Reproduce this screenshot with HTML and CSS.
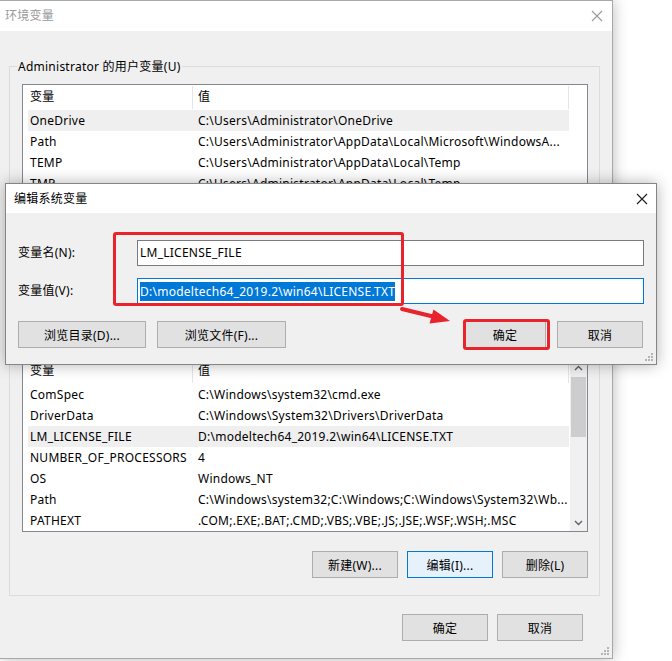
FILE: index.html
```html
<!DOCTYPE html>
<html lang="zh-CN">
<head>
<meta charset="utf-8">
<title>环境变量</title>
<link rel="stylesheet" href="styles.css">
</head>
<body>
<div class="desk">
  <div class="win main">
    <div class="titlebar">
      <span class="ttl inactive">环境变量</span>
      <svg class="close" width="12" height="12" viewBox="0 0 12 12"><path d="M1 1L11 11M11 1L1 11" stroke="#9a9a9a" stroke-width="1.1" fill="none"/></svg>
    </div>
    <div class="wbody">
      <div class="group g1">
        <span class="legend">Administrator 的用户变量(U)</span>
        <div class="list l1">
          <div class="tbl">
            <div class="hd c1">变量</div><div class="hd c2">值</div>
            <div class="c1 sel">OneDrive</div><div class="c2 sel">C:\Users\Administrator\OneDrive</div>
            <div class="c1">Path</div><div class="c2">C:\Users\Administrator\AppData\Local\Microsoft\WindowsA...</div>
            <div class="c1">TEMP</div><div class="c2">C:\Users\Administrator\AppData\Local\Temp</div>
            <div class="c1">TMP</div><div class="c2">C:\Users\Administrator\AppData\Local\Temp</div>
          </div>
          <div class="sbar blank"></div>
        </div>
        <div class="btnrow">
          <button class="btn">新建(N)...</button>
          <button class="btn">编辑(E)...</button>
          <button class="btn">删除(D)</button>
        </div>
      </div>
      <div class="group g2">
        <span class="legend">系统变量(S)</span>
        <div class="list l2">
          <div class="tbl">
            <div class="hd c1">变量</div><div class="hd c2">值</div>
            <div class="c1">ComSpec</div><div class="c2">C:\Windows\system32\cmd.exe</div>
            <div class="c1">DriverData</div><div class="c2">C:\Windows\System32\Drivers\DriverData</div>
            <div class="c1 sel">LM_LICENSE_FILE</div><div class="c2 sel">D:\modeltech64_2019.2\win64\LICENSE.TXT</div>
            <div class="c1">NUMBER_OF_PROCESSORS</div><div class="c2">4</div>
            <div class="c1">OS</div><div class="c2">Windows_NT</div>
            <div class="c1">Path</div><div class="c2">C:\Windows\system32;C:\Windows;C:\Windows\System32\Wb...</div>
            <div class="c1">PATHEXT</div><div class="c2">.COM;.EXE;.BAT;.CMD;.VBS;.VBE;.JS;.JSE;.WSF;.WSH;.MSC</div>
          </div>
          <div class="sbar">
            <div class="sarrow"><svg width="9" height="6" viewBox="0 0 9 6"><path d="M1 5L4.5 1.5L8 5" stroke="#606060" stroke-width="1.4" fill="none"/></svg></div>
            <div class="thumb"></div>
            <div class="strack"></div>
            <div class="sarrow"><svg width="9" height="6" viewBox="0 0 9 6"><path d="M1 1L4.5 4.5L8 1" stroke="#606060" stroke-width="1.4" fill="none"/></svg></div>
          </div>
        </div>
        <div class="btnrow">
          <button class="btn">新建(W)...</button>
          <button class="btn focus">编辑(I)...</button>
          <button class="btn">删除(L)</button>
        </div>
      </div>
      <div class="btnrow foot">
        <button class="btn">确定</button>
        <button class="btn">取消</button>
      </div>
    </div>
    <svg class="grip" width="8" height="8" viewBox="0 0 8 8"><g fill="#b4b4b4"><rect x="6" y="0" width="2" height="2"/><rect x="3" y="3" width="2" height="2"/><rect x="6" y="3" width="2" height="2"/><rect x="0" y="6" width="2" height="2"/><rect x="3" y="6" width="2" height="2"/><rect x="6" y="6" width="2" height="2"/></g></svg>
  </div>

  <div class="win dlg">
    <div class="titlebar dtitle">
      <span class="ttl">编辑系统变量</span>
      <svg class="close" width="12" height="12" viewBox="0 0 12 12"><path d="M1 1L11 11M11 1L1 11" stroke="#1a1a1a" stroke-width="1.1" fill="none"/></svg>
    </div>
    <div class="dbody">
      <div class="form">
        <label class="lbl">变量名(N):</label>
        <div class="input">LM_LICENSE_FILE</div>
        <label class="lbl">变量值(V):</label>
        <div class="input active"><span class="selection">D:\modeltech64_2019.2\win64\LICENSE.TXT</span></div>
      </div>
      <div class="dbtns">
        <button class="btn browse1">浏览目录(D)...</button>
        <button class="btn browse2">浏览文件(F)...</button>
        <div class="spacer"></div>
        <button class="btn ok">确定</button>
        <button class="btn cancel">取消</button>
      </div>
    </div>
    <svg class="grip" width="8" height="8" viewBox="0 0 8 8"><g fill="#b4b4b4"><rect x="6" y="0" width="2" height="2"/><rect x="3" y="3" width="2" height="2"/><rect x="6" y="3" width="2" height="2"/><rect x="0" y="6" width="2" height="2"/><rect x="3" y="6" width="2" height="2"/><rect x="6" y="6" width="2" height="2"/></g></svg>
  </div>

  <div class="mark m1"></div>
  <div class="mark m2"></div>
  <svg class="arrow" width="672" height="661" viewBox="0 0 672 661">
    <line x1="402" y1="309" x2="433" y2="316.5" stroke="#e8232b" stroke-width="4" stroke-linecap="round"/>
    <polygon points="450,321 433.5,309.5 429.5,323.5" fill="#e8232b"/>
  </svg>
</div>
</body>
</html>
```

FILE: styles.css
```css
* { box-sizing: border-box; }
html, body { margin: 0; padding: 0; background: #ffffff; }
body {
  font-family: "Noto Sans", "Noto Sans CJK SC", sans-serif;
  font-size: 12px;
  letter-spacing: 0.25px;
  color: #000;
}
.desk { position: relative; width: 672px; height: 661px; overflow: hidden; }

.win { position: absolute; background: #f0f0f0; }
.main {
  left: 0; top: 0; width: 613px; height: 659px;
  border-top: 1px solid #a8a8a8;
  border-right: 1px solid #a8a8a8;
  border-bottom: 1px solid #a8a8a8;
  box-shadow: 0 0 14px rgba(0,0,0,0.28);
}
.titlebar {
  height: 30px; background: #fff;
  display: flex; align-items: center; justify-content: space-between;
  padding: 0 8px 0 5px;
}
.ttl { font-size: 12px; line-height: 16px; }
.ttl.inactive { color: #9a9a9a; }
.close { display: block; }
.main .titlebar .close { margin-right: 1px; }

.wbody { padding: 35px 12px 0 9px; }
.group {
  border: 1px solid #dcdcdc;
  padding: 0 11px 17px 12px;
}
.g2 { margin-top: 11px; }
.legend {
  display: block; width: max-content;
  margin: -9px 0 0 -5px; padding: 0 1px;
  line-height: 17px; background: #f0f0f0;
}
.list {
  margin-top: 9px;
  border: 1px solid #828790;
  background: #fff;
  display: flex;
  overflow: hidden;
}
.l1 { height: 182px; }
.l2 { height: 174px; }
.tbl {
  flex: 1;
  display: grid;
  grid-template-columns: 164px 377px;
  grid-auto-rows: 21px;
  grid-template-rows: 25px;
  margin-left: 5px;
  align-content: start;
}
.tbl > div {
  white-space: nowrap; overflow: hidden;
  line-height: 21px;
}
.c1 { padding-left: 2px; }
.c2 { padding-left: 6px; }
.hd.c2 { border-left: 1px solid #e5e5e5; border-right: 1px solid #e5e5e5; padding-left: 5px; margin: 1px 0; line-height: 22px !important; }
.hd.c1 { margin: 1px 0; line-height: 22px !important; }
.sel { background: #efefef; }
.sbar { width: 17px; display: flex; flex-direction: column; background: #f0f0f0; }
.sbar.blank { background: #fff; }
.sarrow { height: 17px; display: flex; align-items: center; justify-content: center; }
.thumb { height: 60px; margin: 1px 1px 0 1px; background: #cdcdcd; }
.strack { flex: 1; }

.btnrow { display: flex; justify-content: flex-end; gap: 9px; margin-top: 19px; }
.g1 .btnrow { margin-top: 18px; }
.btn {
  font: inherit; color: #000; letter-spacing: inherit;
  width: 86px; height: 27px;
  background: #e1e1e1; border: 1px solid #adadad;
  padding: 0; margin: 0;
}
.btn.focus { background: #e5f1fb; border-color: #0078d7; }
.foot { margin-top: 18px; margin-right: 17px; }

.grip { position: absolute; right: 3px; bottom: 3px; }

.dlg {
  left: 5px; top: 183px; width: 652px; height: 182px;
  border: 1px solid #858585;
  box-shadow: 0 0 14px rgba(0,0,0,0.3);
}
.dtitle { height: 29px; padding: 0 8px 0 8px; }
.dbody { padding: 27px 12px 16px 12px; }
.form {
  display: grid;
  grid-template-columns: 119px 1fr;
  row-gap: 12px;
  align-items: center;
}
.lbl { line-height: 26px; }
.input {
  height: 26px; background: #fff;
  border: 1px solid #7a7a7a;
  padding: 0 2px;
  line-height: 24px;
  white-space: nowrap;
}
.input.active { border-color: #0078d7; display: flex; align-items: center; }
.selection { background: #0078d7; color: #fff; line-height: 19px; display: inline-block; }
.dbtns { display: flex; margin-top: 17px; gap: 11px; }
.browse1 { width: 128px; }
.browse2 { width: 129px; }
.spacer { flex: 1; }
.ok { width: 82px; }
.cancel { width: 86px; margin-right: 1px; }

.mark {
  position: absolute;
  border: 3px solid #e8232b;
  border-radius: 3px;
}
.m1 { left: 113px; top: 232px; width: 291px; height: 74px; }
.m2 { left: 463px; top: 319px; width: 87px; height: 31px; }
.arrow { position: absolute; left: 0; top: 0; pointer-events: none; }
```
